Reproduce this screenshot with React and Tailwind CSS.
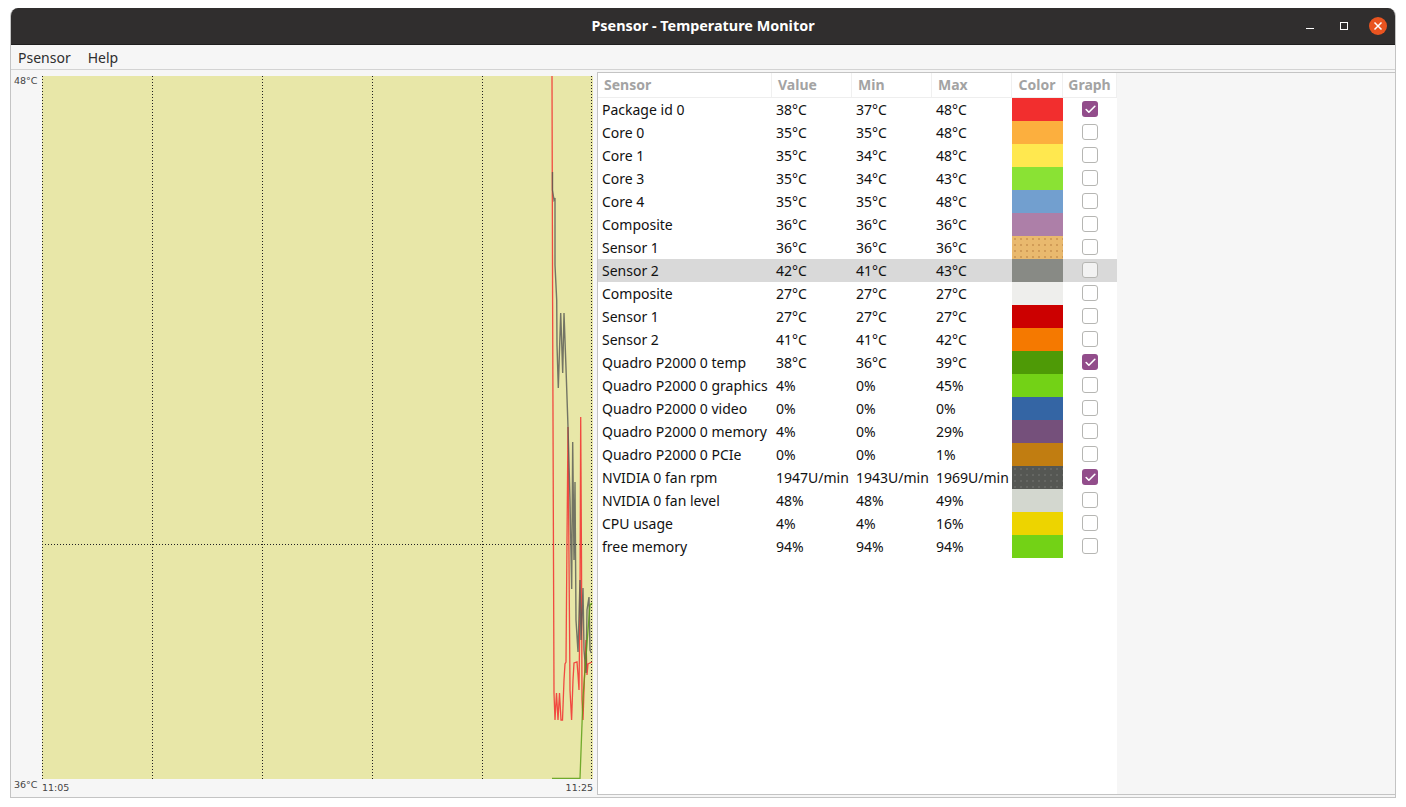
import React from "react";
import { Check } from "lucide-react";

const SENSORS = [
  ["Package id 0", "38°C", "37°C", "48°C", "bg-[#f22e2e]", true],
  ["Core 0", "35°C", "35°C", "48°C", "bg-[#fcaf3e]", false],
  ["Core 1", "35°C", "34°C", "48°C", "bg-[#ffe84f]", false],
  ["Core 3", "35°C", "34°C", "43°C", "bg-[#8ae234]", false],
  ["Core 4", "35°C", "35°C", "48°C", "bg-[#729fcf]", false],
  ["Composite", "36°C", "36°C", "36°C", "bg-[#ad7fa8]", false],
  ["Sensor 1", "36°C", "36°C", "36°C", "bg-[#e9b96e] bg-[radial-gradient(#d09a55_0.7px,transparent_0.8px)] bg-[length:6px_6px]", false],
  ["Sensor 2", "42°C", "41°C", "43°C", "bg-[#888a85]", false],
  ["Composite", "27°C", "27°C", "27°C", "bg-[#eeeeec]", false],
  ["Sensor 1", "27°C", "27°C", "27°C", "bg-[#cc0000]", false],
  ["Sensor 2", "41°C", "41°C", "42°C", "bg-[#f57900]", false],
  ["Quadro P2000 0 temp", "38°C", "36°C", "39°C", "bg-[#4e9a06]", true],
  ["Quadro P2000 0 graphics", "4%", "0%", "45%", "bg-[#73d216]", false],
  ["Quadro P2000 0 video", "0%", "0%", "0%", "bg-[#3465a4]", false],
  ["Quadro P2000 0 memory", "4%", "0%", "29%", "bg-[#75507b]", false],
  ["Quadro P2000 0 PCIe", "0%", "0%", "1%", "bg-[#c17d11]", false],
  ["NVIDIA 0 fan rpm", "1947U/min", "1943U/min", "1969U/min", "bg-[#555753] bg-[radial-gradient(#666864_0.7px,transparent_0.8px)] bg-[length:6px_6px]", true],
  ["NVIDIA 0 fan level", "48%", "48%", "49%", "bg-[#d3d7cf]", false],
  ["CPU usage", "4%", "4%", "16%", "bg-[#edd400]", false],
  ["free memory", "94%", "94%", "94%", "bg-[#73d216]", false],
];

const HEADERS = ["Sensor", "Value", "Min", "Max", "Color", "Graph"];
const COLS = "grid grid-cols-[174px_80px_80px_80px_51px_54px] w-[519px]";

const RED =
  "M552 76 L552.6 300 L553.5 560 L554 693 L555 720 L556.5 693 L558 720 L559.5 693 L561 720 L562.5 720 L564 680 L565 664 L566 662 L567 540 L568 427 L569 560 L570 690 L571.6 720 L573 680 L574 663 L577 662 L578 675 L579 690 L580 600 L580.7 417 L581.5 560 L582 700 L583 720 L584 690 L585 663 L586 640 L587 675 L588 664 L592 662";
const GRAY =
  "M552.5 172 L552.5 190 L554 200 L555 198 L555 265 L556.7 300 L557 345 L558.3 388 L560.7 313 L562.7 373 L564 313 L566 368 L568 427 L570 500 L570.7 537 L571.7 589 L572.7 442 L574 560 L575 482 L576 620 L578 652 L580 580 L581 640 L583 588 L584 650 L586 673 L587 610 L589 597 L590 650 L591.3 653";
const GREEN =
  "M552 778.5 L580 778.5 L583 697 L586.7 647 L590 605 L592 603";

function CheckBox({ checked, hovered }) {
  if (checked) {
    return (
      <span className="flex h-4 w-4 items-center justify-center rounded-[3px] bg-[#924d8b]">
        <Check size={13} strokeWidth={3} color="#fff" />
      </span>
    );
  }
  return (
    <span className={`h-4 w-4 rounded-[3px] border border-[#b6b6b3] ${hovered ? "bg-[#f2f2f2]" : "bg-white"}`} />
  );
}

function Chart() {
  return (
    <div className="grid h-[727px] w-[582px] grid-cols-[31px_551px] grid-rows-[6px_703px_18px] text-[9.5px] text-[#444] [font-family:'DejaVu_Sans',sans-serif]">
      <div className="col-span-2" />
      <div className="flex flex-col justify-between pl-[3px] leading-none">
        <span>48°C</span>
        <span className="-mb-[10px]">36°C</span>
      </div>
      <svg viewBox="42 76 551 703" className="h-[703px] w-[551px] bg-[#e8e7a8]">
        <g stroke="#222" strokeWidth="1" strokeDasharray="1 2" fill="none">
          <path d="M42.5 76V779M152.5 76V779M262.5 76V779M372.5 76V779M482.5 76V779M591.5 76V779M42 544.5H593" />
        </g>
        <path d={RED} stroke="#f22e2e" strokeWidth="1.3" opacity="0.85" fill="none" />
        <path d={GRAY} stroke="#555753" strokeWidth="1.4" opacity="0.8" fill="none" />
        <path d={GREEN} stroke="#5c9f16" strokeWidth="1.3" opacity="0.85" fill="none" />
      </svg>
      <div />
      <div className="flex items-start justify-between pt-1 leading-none">
        <span>11:05</span>
        <span>11:25</span>
      </div>
    </div>
  );
}

export default function App() {
  return (
    <div className="h-[807px] bg-white pb-[9px] pl-2.5 pr-2.5 pt-2 [font-family:'Noto_Sans',sans-serif]">
      <div className="flex h-[790px] w-[1386px] flex-col overflow-hidden rounded-t-lg border border-t-0 border-[#c4c4c4] bg-[#f6f6f6]">
        <div className="relative flex h-[37px] shrink-0 items-center justify-center border-b border-[#1f1e1e] bg-[#302e2e]">
          <span className="text-[14.4px] font-bold text-white">Psensor - Temperature Monitor</span>
          <div className="absolute inset-y-0 right-[8px] flex items-center">
            <span className="mr-[26px] mt-[4px] h-px w-2 bg-white" />
            <span className="mr-[21px] h-2 w-2 border border-white" />
            <span className="flex h-[18px] w-[18px] items-center justify-center rounded-full bg-[#e95420]">
              <svg width="10" height="10" viewBox="0 0 10 10" stroke="#fff" strokeWidth="1.5">
                <path d="M1.5 1.5L8.5 8.5M8.5 1.5L1.5 8.5" />
              </svg>
            </span>
          </div>
        </div>
        <div className="flex h-[25px] shrink-0 items-center gap-[17px] border-b border-[#d3d3d3] px-[7px] text-[14px] text-[#2e2e2e]">
          <span>Psensor</span>
          <span>Help</span>
        </div>
        <div className="flex min-h-0 flex-1">
          <Chart />
          <div className="mb-[2px] ml-1 mt-[2px] flex-1 border border-r-0 border-[#c4c4c4] bg-[#f6f6f6]">
            <div className="h-full w-[519px] bg-white text-[14px] text-[#111]">
              <div className={`${COLS} h-[25px] border-b border-[#eeeeee]`}>
                {HEADERS.map((h, i) => (
                  <div
                    key={h}
                    className={`flex items-center border-r border-[#f0f0f0] pb-[2px] font-bold text-[#a3a3a3] ${i > 3 ? "justify-center" : "px-[6px]"}`}
                  >
                    {h}
                  </div>
                ))}
              </div>
              {SENSORS.map(([name, value, min, max, color, checked], i) => (
                <div key={i} className={`${COLS} h-[23px] leading-[23px] ${i === 7 ? "bg-[#d9d9d9]" : ""}`}>
                  <div className="whitespace-nowrap pl-1">{name}</div>
                  <div className="whitespace-nowrap pl-1">{value}</div>
                  <div className="whitespace-nowrap pl-1">{min}</div>
                  <div className="whitespace-nowrap pl-1">{max}</div>
                  <div className={color} />
                  <div className="flex items-center justify-center pb-[1px]">
                    <CheckBox checked={checked} hovered={i === 7} />
                  </div>
                </div>
              ))}
            </div>
          </div>
        </div>
      </div>
    </div>
  );
}
